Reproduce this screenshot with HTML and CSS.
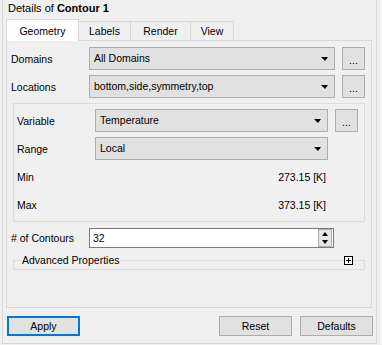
FILE: index.html
```html
<!DOCTYPE html>
<html lang="en">
<head>
    <meta charset="UTF-8">
    <title>Details of Contour 1</title>
    <link rel="stylesheet" href="styles.css">
</head>
<body>
    <div class="frame">
        <div class="title">Details of <b>Contour 1</b></div>

        <!-- Tab bar -->
        <div class="tabs">
            <div class="tab active">Geometry</div>
            <div class="tab tab-labels">Labels</div>
            <div class="tab tab-render">Render</div>
            <div class="tab tab-view">View</div>
        </div>

        <div class="pane">
            <div class="row">
                <label>Domains</label>
                <div class="combo">All Domains</div>
                <button class="more">...</button>
            </div>
            <div class="row gap">
                <label>Locations</label>
                <div class="combo">bottom,side,symmetry,top</div>
                <button class="more">...</button>
            </div>

            <div class="group">
                <div class="row">
                    <label>Variable</label>
                    <div class="combo">Temperature</div>
                    <button class="more">...</button>
                </div>
                <div class="row">
                    <label>Range</label>
                    <div class="combo">Local</div>
                    <span class="pad"></span>
                </div>
                <div class="row">
                    <label>Min</label>
                    <div class="value">273.15 [K]</div>
                </div>
                <div class="row">
                    <label>Max</label>
                    <div class="value">373.15 [K]</div>
                </div>
            </div>

            <div class="row spin-row">
                <label># of Contours</label>
                <div class="spin">
                    <span class="spin-text">32</span>
                    <div class="spin-btns">
                        <div class="spin-up"></div>
                        <div class="spin-down"></div>
                    </div>
                </div>
            </div>

            <div class="advanced">
                <span class="adv-title">Advanced Properties</span>
                <svg class="expand" width="9" height="9" viewBox="0 0 9 9">
                    <rect x="0.5" y="0.5" width="8" height="8" fill="#fff" stroke="#000"/>
                    <path d="M2 4.5h5M4.5 2v5" stroke="#000"/>
                </svg>
            </div>
        </div>

        <!-- Bottom buttons -->
        <div class="actions">
            <button class="btn default">Apply</button>
            <button class="btn reset">Reset</button>
            <button class="btn">Defaults</button>
        </div>
    </div>
</body>
</html>
```

FILE: styles.css
```css
body {
    margin: 0;
    background: #f0f0f0;
    font-family: "Liberation Sans", Arial, sans-serif;
    font-size: 10.5px;
    color: #000;
}
.frame {
    box-sizing: border-box;
    margin-left: 2px;
    width: 375px;
    height: 344px;
    border: 1px solid #d8d8d8;
    border-top: none;
}
.title {
    height: 19px;
    line-height: 17px;
    padding-left: 5px;
    font-size: 11px;
}

/* tabs */
.tabs {
    display: flex;
    align-items: flex-end;
    height: 21px;
    margin-left: 3px;
}
.tab {
    box-sizing: border-box;
    height: 19px;
    line-height: 19px;
    text-align: center;
    border: 1px solid #d9d9d9;
    border-left: none;
    border-bottom: none;
}
.tab.active {
    width: 73px;
    height: 22px;
    margin-bottom: -1px;
    padding-top: 2px;
    line-height: 18px;
    border-left: 1px solid #d9d9d9;
    background: #fff;
    position: relative;
    z-index: 1;
}
.tab-labels { width: 52px; }
.tab-render { width: 60px; }
.tab-view { width: 43px; }

.pane {
    box-sizing: border-box;
    margin-left: 3px;
    width: 366px;
    height: 268px;
    border: 1px solid #d9d9d9;
    padding: 6px 6px 0 4px;
}
.row {
    display: flex;
    align-items: center;
    height: 23px;
}
.row.gap { margin-top: 5px; }
.row label {
    flex: none;
    width: 78px;
}
.combo {
    box-sizing: border-box;
    flex: 1;
    height: 23px;
    line-height: 21px;
    padding-left: 4px;
    border: 1px solid #adadad;
    background: #e1e1e1;
    position: relative;
    white-space: nowrap;
}
.combo::after {
    content: "";
    position: absolute;
    right: 6px;
    top: 9px;
    border-left: 4px solid transparent;
    border-right: 3px solid transparent;
    border-top: 4px solid #000;
}
.more {
    box-sizing: border-box;
    flex: none;
    width: 23px;
    height: 23px;
    margin-left: 7px;
    padding: 2px 0 0;
    border: 1px solid #adadad;
    background: #e1e1e1;
    font-family: inherit;
    font-size: 10.5px;
    color: #000;
}
.pad {
    flex: none;
    width: 30px;
}

/* inner group */
.group {
    margin: 5px 0 0 2px;
    border: 1px solid #dcdcdc;
    padding: 5px 6px 5px 3px;
    display: flex;
    flex-direction: column;
    gap: 5px;
}
.value {
    flex: 1;
    text-align: right;
    padding-right: 2px;
    margin-right: 30px;
}

/* spin box */
.spin-row {
    margin-top: 6px;
    height: 20px;
}
.spin {
    box-sizing: border-box;
    flex: 1;
    height: 20px;
    margin-right: 31px;
    border: 1px solid #7a7a7a;
    background: #fff;
    display: flex;
    align-items: center;
}
.spin-text {
    flex: 1;
    padding-left: 3px;
}
.spin-btns {
    box-sizing: border-box;
    width: 14px;
    height: 18px;
    margin-right: 1px;
    border: 1px solid #adadad;
    background: #e6e6e6;
    display: flex;
    flex-direction: column;
}
.spin-up, .spin-down {
    flex: 1;
    display: flex;
    align-items: center;
    justify-content: center;
}
.spin-up::after {
    content: "";
    border-left: 3px solid transparent;
    border-right: 3px solid transparent;
    border-bottom: 4px solid #000;
}
.spin-down::after {
    content: "";
    border-left: 3px solid transparent;
    border-right: 3px solid transparent;
    border-top: 4px solid #000;
}

/* collapsed group */
.advanced {
    margin: 12px 0 0 2px;
    height: 8px;
    border: 1px solid #dcdcdc;
    position: relative;
}
.adv-title {
    position: absolute;
    left: 7px;
    top: -7px;
    line-height: 13px;
    padding: 0 1px;
    background: #f0f0f0;
}
.expand {
    position: absolute;
    right: 11px;
    top: -5px;
}

/* bottom buttons */
.actions {
    display: flex;
    margin: 8px 3px 0 4px;
}
.btn {
    box-sizing: border-box;
    width: 73px;
    height: 20px;
    padding: 0;
    border: 1px solid #adadad;
    background: #e1e1e1;
    font-family: inherit;
    font-size: 10.5px;
    color: #000;
}
.btn.default {
    border: 2px solid #0078d7;
}
.btn.reset {
    margin-left: auto;
    margin-right: 8px;
}
```
